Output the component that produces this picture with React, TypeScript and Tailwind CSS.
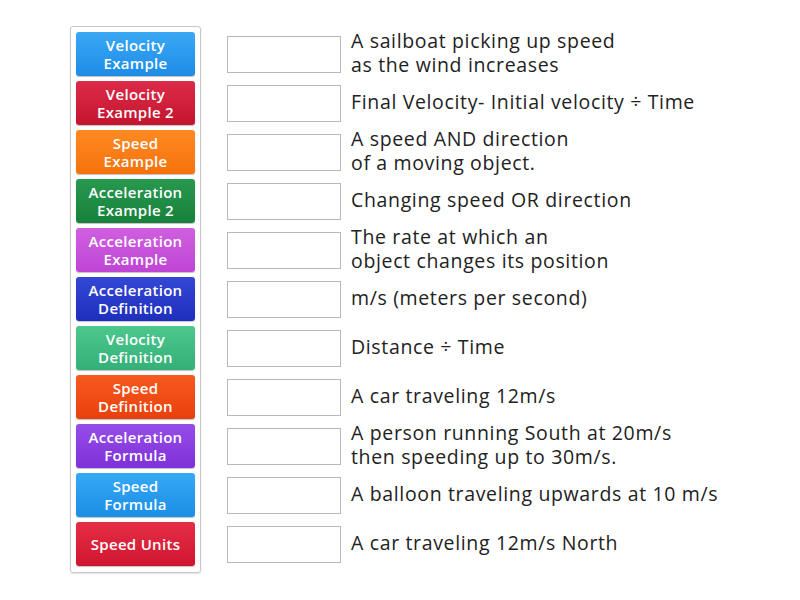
import React from "react";

type Tile = { label: string[]; from: string; to: string };

const tiles: Tile[] = [
  { label: ["Velocity", "Example"], from: "from-[#3aa8f5]", to: "to-[#1d8ce6]" },
  { label: ["Velocity", "Example 2"], from: "from-[#dc2a48]", to: "to-[#c4152f]" },
  { label: ["Speed", "Example"], from: "from-[#ff8a22]", to: "to-[#f4720a]" },
  { label: ["Acceleration", "Example 2"], from: "from-[#27994f]", to: "to-[#17813c]" },
  { label: ["Acceleration", "Example"], from: "from-[#d05fe0]", to: "to-[#bf45d4]" },
  { label: ["Acceleration", "Definition"], from: "from-[#3446d6]", to: "to-[#1f2fbd]" },
  { label: ["Velocity", "Definition"], from: "from-[#4cc78e]", to: "to-[#34b078]" },
  { label: ["Speed", "Definition"], from: "from-[#f7591f]", to: "to-[#e8400a]" },
  { label: ["Acceleration", "Formula"], from: "from-[#964ce8]", to: "to-[#7f30d9]" },
  { label: ["Speed", "Formula"], from: "from-[#35a8f5]", to: "to-[#1b8ee6]" },
  { label: ["Speed Units"], from: "from-[#e62c46]", to: "to-[#d0152f]" },
];

const answers: string[][] = [
  ["A sailboat picking up speed", "as the wind increases"],
  ["Final Velocity- Initial velocity ÷ Time"],
  ["A speed AND direction", "of a moving object."],
  ["Changing speed OR direction"],
  ["The rate at which an", "object changes its position"],
  ["m/s (meters per second)"],
  ["Distance ÷ Time"],
  ["A car traveling 12m/s"],
  ["A person running South at 20m/s", "then speeding up to 30m/s."],
  ["A balloon traveling upwards at 10 m/s"],
  ["A car traveling 12m/s North"],
];

export default function App() {
  return (
    <div className="w-[800px] h-[600px] bg-white flex pl-[70px] pt-[26px] font-['Open_Sans',sans-serif]">
      {/* tile tray */}
      <div className="w-[131px] h-[547px] border border-[#c8c8c8] rounded-[3px] p-[5px] flex flex-col gap-[5px] shadow-[0_1px_2px_rgba(0,0,0,0.12)]">
        {tiles.map((t, i) => (
          <div
            key={i}
            className={`h-[44px] rounded-[3px] bg-gradient-to-b ${t.from} ${t.to} flex flex-col items-center justify-center text-white text-[15px] leading-[18px] font-semibold tracking-[0.3px] shadow-[0_1px_1px_rgba(0,0,0,0.25)]`}
          >
            {t.label.map((l, j) => (
              <span key={j} className="whitespace-nowrap">{l}</span>
            ))}
          </div>
        ))}
      </div>

      {/* drop targets */}
      <div className="ml-[26px] pt-[6px] flex flex-col gap-[5px]">
        {answers.map((a, i) => (
          <div key={i} className="h-[44px] flex items-center">
            <div className="w-[114px] h-[37px] border border-[#b9b9b9] bg-white shrink-0" />
            <div className="ml-[10px] mb-[3px] text-[19.5px] leading-[24px] tracking-[0.65px] text-[#222]">
              {a.map((l, j) => (
                <div key={j} className="whitespace-nowrap">{l}</div>
              ))}
            </div>
          </div>
        ))}
      </div>
    </div>
  );
}
